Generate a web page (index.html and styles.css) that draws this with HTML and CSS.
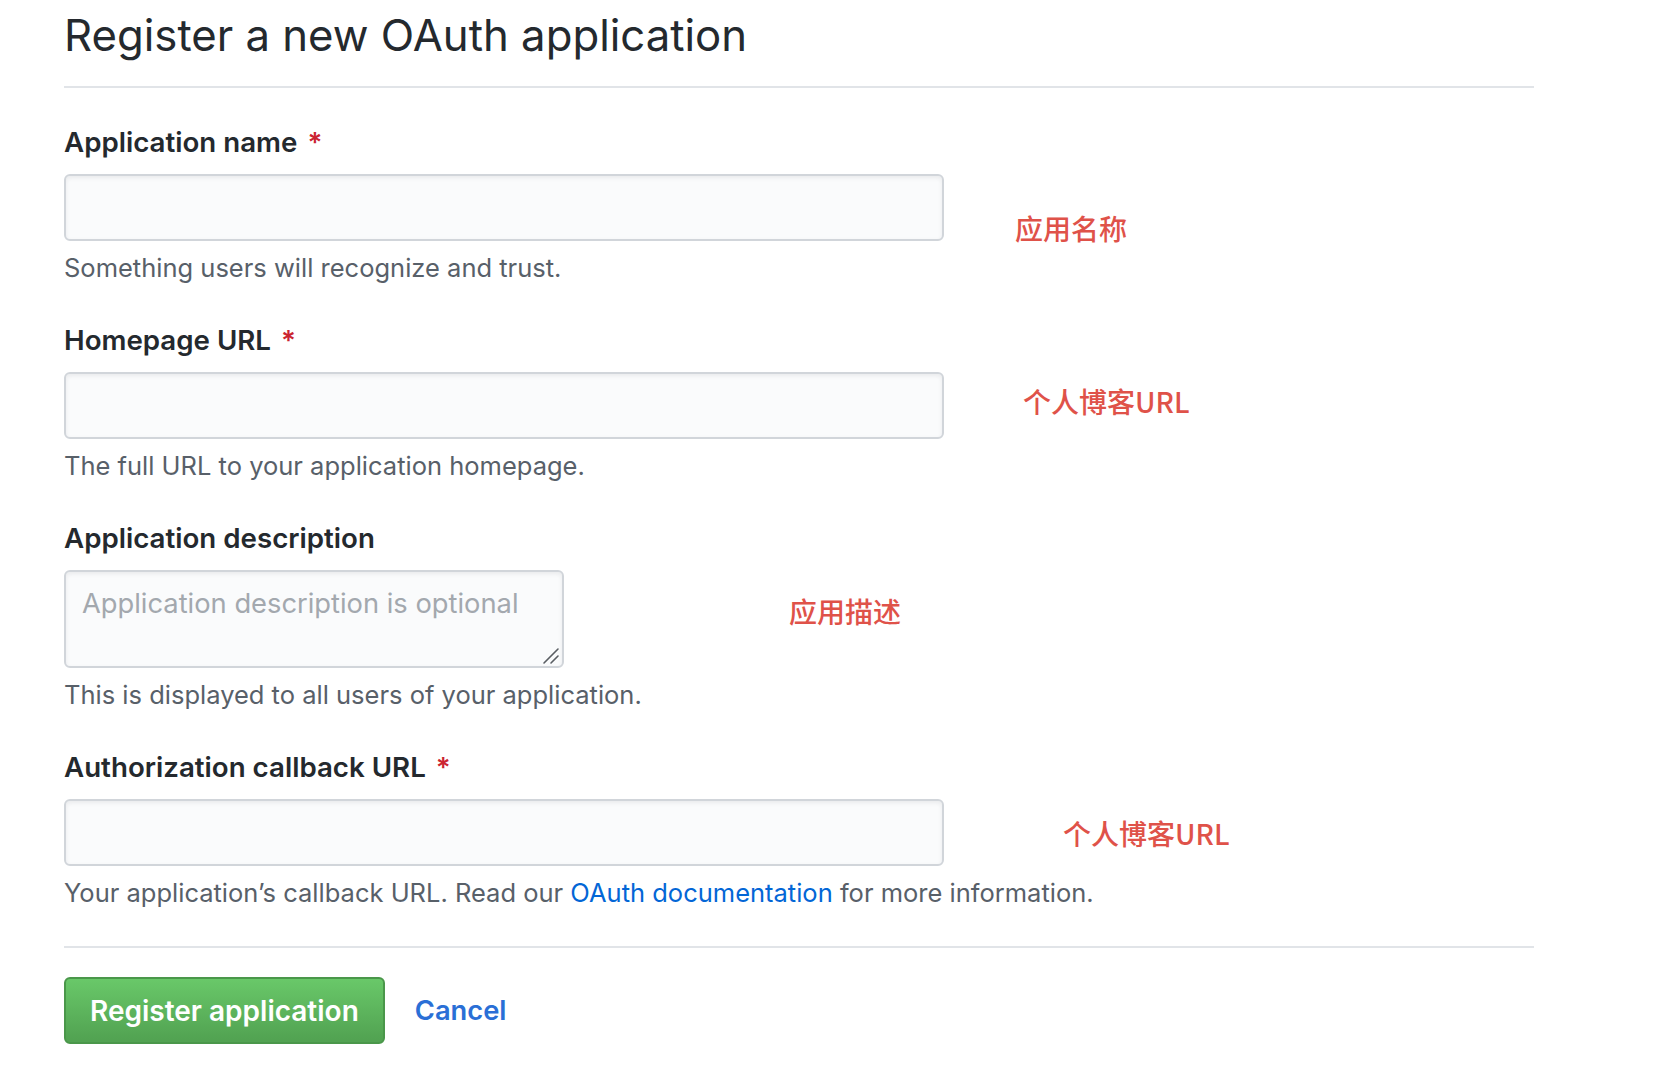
FILE: index.html
```html
<!DOCTYPE html>
<html lang="en">
<head>
<meta charset="utf-8">
<title>Register a new OAuth application</title>
<link rel="stylesheet" href="styles.css">
</head>
<body>
<div class="page">
  <div class="subhead">
    <h2 class="subhead-heading">Register a new OAuth application</h2>
  </div>
  <form class="oauth-form">
    <div class="form-group">
      <label class="form-label">Application name <span class="required">*</span></label>
      <input class="form-control" type="text">
      <p class="note">Something users will recognize and trust.</p>
    </div>
    <div class="form-group">
      <label class="form-label">Homepage URL <span class="required">*</span></label>
      <input class="form-control" type="text">
      <p class="note">The full URL to your application homepage.</p>
    </div>
    <div class="form-group">
      <label class="form-label">Application description</label>
      <div class="textarea-wrap">
        <textarea class="form-control textarea" placeholder="Application description is optional"></textarea>
        <svg class="resize-grip" width="20" height="20" viewBox="0 0 20 20" aria-hidden="true">
          <line x1="2" y1="17" x2="16" y2="3" stroke="#5a5e63" stroke-width="1.6" stroke-linecap="round"/>
          <line x1="9" y1="17" x2="16" y2="10" stroke="#5a5e63" stroke-width="1.6" stroke-linecap="round"/>
        </svg>
      </div>
      <p class="note">This is displayed to all users of your application.</p>
    </div>
    <div class="form-group last">
      <label class="form-label">Authorization callback URL <span class="required">*</span></label>
      <input class="form-control" type="text">
      <p class="note">Your application’s callback URL. Read our <a class="link" href="#">OAuth documentation</a> for more information.</p>
    </div>
    <div class="form-actions">
      <button class="btn-primary" type="button">Register application</button>
      <a class="btn-link" href="#">Cancel</a>
    </div>
  </form>
  <span class="annot annot-1">应用名称</span>
  <span class="annot annot-2">个人博客URL</span>
  <span class="annot annot-3">应用描述</span>
  <span class="annot annot-4">个人博客URL</span>
</div>
</body>
</html>
```

FILE: styles.css
```css
* { box-sizing: border-box; }
html, body {
  margin: 0;
  padding: 0;
  background: #ffffff;
}
body {
  font-family: Inter, "Liberation Sans", "Noto Sans CJK SC", sans-serif;
  color: #24292e;
}
.page {
  position: relative;
  width: 1534px;
  padding-left: 64px;
  min-height: 1080px;
}
.subhead {
  padding-top: 6px;
  padding-bottom: 20px;
  border-bottom: 2px solid #e1e4e8;
}
.subhead-heading {
  margin: 0;
  font-size: 43.7px;
  line-height: 60px;
  font-weight: 400;
  color: #24292e;
}
.oauth-form {
  margin: 0;
  padding-top: 36px;
}
.form-group {
  margin-bottom: 36px;
}
.form-group.last {
  margin-bottom: 0;
}
.form-label {
  display: block;
  font-size: 27.7px;
  line-height: 36px;
  font-weight: 600;
  color: #24292e;
  margin-bottom: 14px;
}
.required {
  color: #cb2431;
  margin-left: 3px;
}
.form-control {
  display: block;
  width: 880px;
  height: 67px;
  margin: 0;
  padding: 12px 16px;
  font-family: Inter, "Liberation Sans", sans-serif;
  font-size: 27.3px;
  line-height: 40px;
  color: #24292e;
  background-color: #fafbfc;
  border: 2px solid #d1d5da;
  border-radius: 6px;
  box-shadow: inset 0 2px 4px rgba(27, 31, 35, 0.075);
  outline: none;
}
.textarea-wrap {
  position: relative;
  width: 500px;
  height: 98px;
}
.textarea {
  width: 500px;
  height: 98px;
  resize: none;
}
.textarea::placeholder {
  color: #a3a8ae;
}
.resize-grip {
  position: absolute;
  right: 2px;
  bottom: 2px;
}
.note {
  margin: 9px 0 0 0;
  font-size: 25.5px;
  line-height: 36px;
  color: #586069;
}
.link {
  color: #0366d6;
  text-decoration: none;
}
.form-actions {
  margin-top: 35px;
  padding-top: 29px;
  border-top: 2px solid #e1e4e8;
  display: flex;
  align-items: center;
  gap: 30px;
}
.btn-primary {
  height: 67px;
  padding: 0 24px;
  font-family: Inter, "Liberation Sans", sans-serif;
  font-size: 28px;
  font-weight: 600;
  color: #ffffff;
  background-color: #5cb85c;
  background-image: linear-gradient(180deg, #69c869 0%, #52a352 95%);
  border: 2px solid #4a974a;
  border-radius: 6px;
  cursor: pointer;
}
.btn-link {
  font-size: 27.3px;
  font-weight: 600;
  color: #2a6fd6;
  text-decoration: none;
}
.annot {
  position: absolute;
  font-family: "Noto Sans CJK SC", "Noto Sans", sans-serif;
  font-size: 28px;
  line-height: 28px;
  font-weight: 500;
  color: #df5249;
  white-space: nowrap;
}
.annot-1 { left: 1015px; top: 214px; }
.annot-2 { left: 1023px; top: 387px; }
.annot-3 { left: 789px; top: 597px; }
.annot-4 { left: 1063px; top: 819px; }
```
